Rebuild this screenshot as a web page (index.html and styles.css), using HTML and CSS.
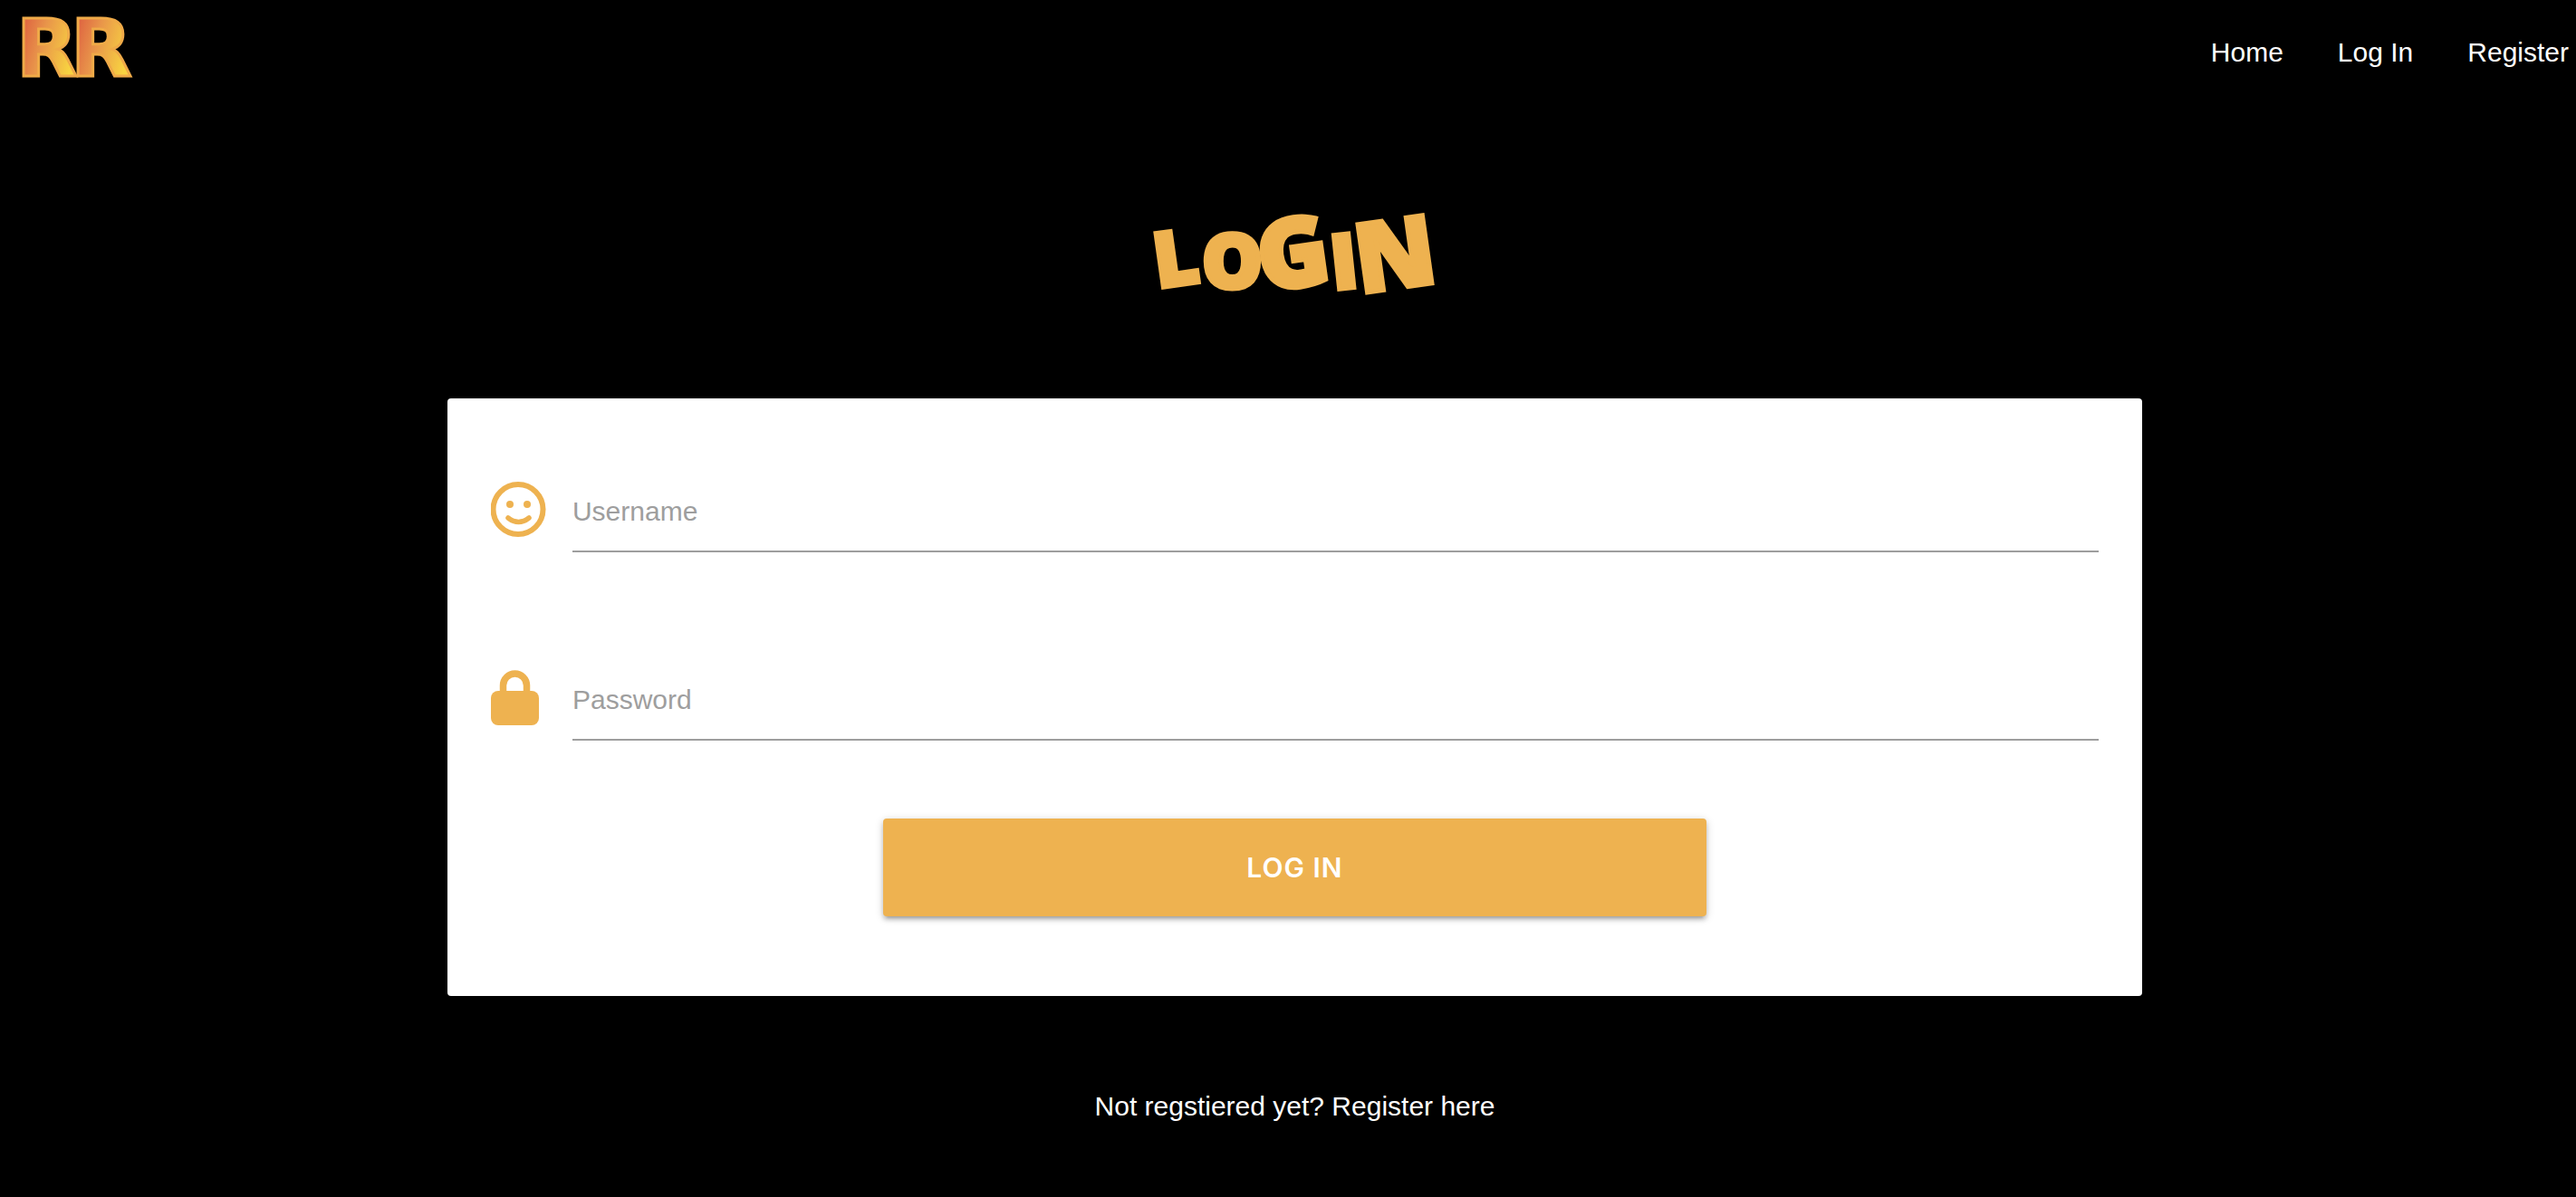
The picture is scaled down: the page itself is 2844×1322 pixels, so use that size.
FILE: index.html
```html
<!DOCTYPE html>
<html lang="en">
<head>
<meta charset="utf-8">
<meta name="viewport" content="width=device-width, initial-scale=1">
<title>Log In</title>
<link rel="stylesheet" href="styles.css">
</head>
<body>
<header class="site-header">
  <a class="logo" href="#" aria-label="RR home">
    <svg width="140" height="116" viewBox="0 0 140 116" aria-hidden="true">
      <defs>
        <linearGradient id="flame" x1="0" y1="0" x2="1" y2="0.4">
          <stop offset="0" stop-color="#d94a3c"/>
          <stop offset="0.5" stop-color="#e8944a"/>
          <stop offset="1" stop-color="#f8d341"/>
        </linearGradient>
      </defs>
      <text class="logo-letter" x="56" y="84">R</text>
      <text class="logo-letter" x="-4" y="84">R</text>
    </svg>
  </a>
  <nav class="site-nav">
    <a href="#">Home</a>
    <a href="#">Log In</a>
    <a href="#">Register</a>
  </nav>
</header>
<main class="page">
  <h1 class="title">
    <svg class="title-art" width="340" height="140" viewBox="0 0 340 140">
      <text x="174" y="108" text-anchor="middle" rotate="-8 0 -8 -6 -8"><tspan>LO</tspan><tspan class="tall" dy="4">G</tspan><tspan dy="-2">I</tspan><tspan class="tall" dy="4">N</tspan></text>
    </svg>
  </h1>
  <form class="card">
    <div class="field">
      <label class="field-icon" for="username">
        <svg width="61" height="61" viewBox="0 0 61 61" aria-label="Username">
          <circle cx="30" cy="30.500" r="27.500" fill="none" stroke="#eeb250" stroke-width="6"/>
          <circle cx="21" cy="25" r="4" fill="#eeb250"/>
          <circle cx="40" cy="25" r="4" fill="#eeb250"/>
          <path d="M19 40Q30.500 49 42 40" fill="none" stroke="#eeb250" stroke-width="5.500" stroke-linecap="round"/>
        </svg>
      </label>
      <input class="field-input" id="username" type="text" placeholder="Username">
    </div>
    <div class="field">
      <label class="field-icon" for="password">
        <svg width="53" height="61" viewBox="0 0 53 61" aria-label="Password">
          <path d="M13.500 26V17a13 13 0 0 1 26 0v9" fill="none" stroke="#eeb250" stroke-width="7.500"/>
          <rect y="23" width="53" height="38" rx="8" fill="#eeb250"/>
        </svg>
      </label>
      <input class="field-input" id="password" type="password" placeholder="Password">
    </div>
    <button class="submit" type="submit">LOG IN</button>
  </form>
  <p class="register">Not regstiered yet? <a href="#">Register here</a></p>
</main>
</body>
</html>
```
FILE: styles.css
```css
* {
  box-sizing: border-box;
}

body {
  margin: 0;
  background: #000;
  color: #fff;
  font-family: "Liberation Sans", Arial, sans-serif;
  font-size: 30px;
  line-height: 40px;
}

a {
  color: inherit;
  text-decoration: none;
}

.site-header {
  display: flex;
  justify-content: space-between;
  align-items: center;
  height: 116px;
  padding: 0 8px 0 22px;
}

.logo svg {
  display: block;
  overflow: visible;
}

.logo-letter {
  font-family: "DejaVu Sans", sans-serif;
  font-size: 88px;
  font-weight: 700;
  fill: url(#flame);
  stroke: #efaa48;
  stroke-width: 3px;
}

.site-nav {
  display: flex;
  gap: 60px;
}

.page {
  display: flex;
  flex-direction: column;
  align-items: center;
  padding: 94px 0 68px 15px;
}

.title {
  margin: 0;
  font-family: "Open Sans", sans-serif;
  font-size: 84px;
  font-weight: 800;
}

.title-art {
  display: block;
  overflow: visible;
  fill: #eeb250;
  stroke: #eeb250;
  stroke-width: 5px;
}

.tall {
  font-size: 106px;
}

.card {
  display: flex;
  flex-direction: column;
  width: calc(66% + 4px);
  min-width: 320px;
  margin-top: 90px;
  padding: 60px 48px 88px;
  border-radius: 4px;
  background: #fff;
}

.field {
  display: flex;
  align-items: flex-start;
  margin-bottom: 98px;
}

.field:nth-of-type(2) {
  margin-bottom: 86px;
}

.field-icon {
  flex: 0 0 90px;
  padding-top: 32px;
}

.field-icon svg {
  display: block;
}

.field-input {
  flex: 1;
  min-width: 0;
  height: 110px;
  padding: 22px 0 0;
  border: 0;
  border-bottom: 2px solid #9e9e9e;
  border-radius: 0;
  outline: 0;
  background: transparent;
  color: #333;
  font: inherit;
}

.field-input::placeholder {
  color: #9e9e9e;
  opacity: 1;
}

.submit {
  align-self: center;
  width: calc(50% + 22px);
  height: 108px;
  border: 0;
  border-radius: 4px;
  background: #eeb250;
  box-shadow: 0 4px 4px rgba(0, 0, 0, 0.14), 0 6px 2px -4px rgba(0, 0, 0, 0.12), 0 2px 10px rgba(0, 0, 0, 0.2);
  color: #fff;
  font-family: Inter, sans-serif;
  font-size: 30px;
  font-weight: 600;
  letter-spacing: 1px;
}

.register {
  margin: 102px 0 0;
}
```
